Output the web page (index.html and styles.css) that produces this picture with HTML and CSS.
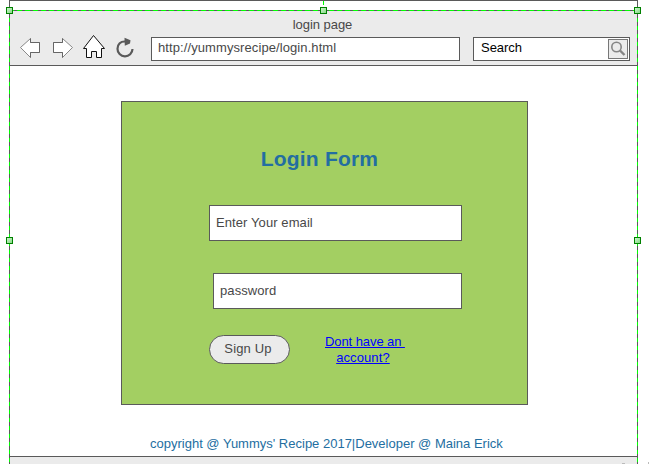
FILE: index.html
```html
<!DOCTYPE html>
<html lang="en">
<head>
<meta charset="utf-8">
<title>login page</title>
<link rel="stylesheet" href="styles.css">
</head>
<body>
<div class="window">
  <div class="top-strip"></div>
  <header class="toolbar">
    <div class="title"><span>login page</span></div>
    <div class="controls">
      <svg class="nav-icons" width="130" height="30" viewBox="10 34 130 30">
        <g fill="#fff" stroke="#888" stroke-width="1">
          <path d="M20.500 47.500L30.500 38.500V42.500H39.500V52.500H30.500V57.500Z"/>
          <path d="M72.500 47.500L62.500 38.500V42.500H53.500V52.500H62.500V57.500Z"/>
        </g>
        <path d="M30.500 38.500V42.500H39.500V52.500H30.500V57.500M62.500 38.500V42.500H53.500V52.500H62.500V57.500" fill="none" stroke="#666"/>
        <path d="M83.500 48.500L93.500 35.500L104.500 48.500H101.500V57.500H96.500V51.500H91.500V57.500H86.500V48.500Z" fill="#fff" stroke="#111"/>
        <path d="M126 41.600C120.500 40.800 117.500 44.500 117.500 48.700A7.500 7.500 0 0 0 132.500 49" fill="none" stroke="#5a5a5a" stroke-width="2.200"/>
        <path d="M124.500 37.800L130.500 40.200L130 43.500L124.800 45.800Z" fill="#5a5a5a"/>
      </svg>
      <div class="url">http://yummysrecipe/login.html</div>
      <div class="search">
        <span>Search</span>
        <svg class="magnifier" width="20" height="20" viewBox="0 0 20 20">
          <rect x=".5" y=".5" width="19" height="19" fill="#ebebeb" stroke="#777"/>
          <circle cx="8.500" cy="8" r="4.700" fill="none" stroke="#858585" stroke-width="1.600"/>
          <path d="M12 11.500L16.500 16" stroke="#858585" stroke-width="2.400"/>
        </svg>
      </div>
    </div>
  </header>
  <main class="page">
    <form class="login">
      <h1><span>Login Form</span></h1>
      <div class="field email">Enter Your email</div>
      <div class="field password">password</div>
      <div class="actions">
        <button type="button">Sign Up</button>
        <a href="#">Dont have an <br><span class="second-line">account?</span></a>
      </div>
    </form>
    <p class="copyright"><span>copyright @ Yummys' Recipe 2017|Developer @ Maina Erick</span></p>
  </main>
  <footer class="status"></footer>
  <svg class="selection" width="652" height="464" viewBox="0 0 652 464">
    <defs>
      <linearGradient id="handle" x1="0" y1="0" x2="1" y2="1">
        <stop offset="0" stop-color="#d3f5d3"/><stop offset="1" stop-color="#80d880"/>
      </linearGradient>
    </defs>
    <g fill="none" stroke="#5a5a5a">
      <path d="M9.500 0V464M637.500 0V464M9 10.500H638"/>
      <path d="M9.500 10V464M637.500 10V464" stroke="#0f0" stroke-dasharray="4 4"/>
      <path d="M9 10.500H638" stroke="#0f0" stroke-dasharray="5 3"/>
      <path d="M323.500 1V5" stroke="#0f0"/>
    </g>
    <g fill="url(#handle)" stroke="#008000">
      <rect x="6.500" y="7.500" width="6" height="6"/>
      <rect x="320.500" y="7.500" width="6" height="6"/>
      <rect x="634.500" y="7.500" width="6" height="6"/>
      <rect x="6.500" y="237.500" width="6" height="6"/>
      <rect x="634.500" y="237.500" width="6" height="6"/>
    </g>
    <path d="M622 463.500H625M648.500 462V464" stroke="#bbb"/>
  </svg>
</div>
</body>
</html>
```
FILE: styles.css
```css
* { box-sizing: border-box; }
body {
  margin: 0;
  background: #fff;
  color: #484848;
  font: 13px/16px "Liberation Sans", Arial, sans-serif;
  letter-spacing: .09px;
  overflow: hidden;
}
.window {
  position: relative;
  display: flex;
  flex-direction: column;
  height: 464px;
  padding: 0 14px 0 9px;
}
.top-strip { height: 10px; border-top: 1px solid #5a5a5a; }
.toolbar {
  height: 56px;
  background: #ebebeb;
  border-bottom: 1px solid #5a5a5a;
}
.title {
  height: 24px;
  padding-top: 7px;
  padding-right: 2px;
  text-align: center;
  letter-spacing: -.05px;
}
.controls { display: flex; padding-left: 1px; }
.nav-icons { flex: none; margin-right: 11px; }
.url, .search {
  height: 24px;
  margin-top: 3px;
  border: 1px solid #5a5a5a;
  background: #fff;
}
.url { width: 309px; padding: 2px 6px; }
.search {
  display: flex;
  justify-content: space-between;
  width: 157px;
  margin-left: 13px;
  padding: 1px 1px 0 7px;
  color: #000;
  letter-spacing: -.04px;
}
.search span { padding-top: 1px; }
.page { height: 390px; padding: 35px 0 0 112px; }
.login {
  width: 407px;
  height: 304px;
  padding: 45px 65px 0 87px;
  border: 1px solid #5a5a5a;
  background: #a3cf62;
}
h1 {
  height: 58px;
  margin: 0 -65px 0 -87px;
  padding-right: 10px;
  color: #236ea1;
  font-size: 21px;
  line-height: 24px;
  letter-spacing: .2px;
  text-align: center;
}
.field {
  height: 36px;
  padding: 9px 6px;
  border: 1px solid #5a5a5a;
  background: #fff;
}
.password { margin: 32px 0 26px 4px; }
.actions { display: flex; }
button {
  width: 81px;
  height: 29px;
  padding: 0 3px 2px 0;
  border: 1px solid #5a5a5a;
  border-radius: 15px;
  background: #ebebeb;
  color: #484848;
  font: inherit;
  letter-spacing: .15px;
}
a {
  margin: -1px 0 0 35px;
  color: #00f;
  letter-spacing: -.08px;
  text-align: center;
  white-space: pre;
}
.second-line { margin-right: 4px; letter-spacing: .1px; }
.copyright {
  margin: 31px 0 0 29px;
  color: #236ea1;
  letter-spacing: 0;
  white-space: nowrap;
}
.status { height: 8px; background: #ebebeb; border-top: 1px solid #5a5a5a; }
.selection { position: absolute; top: 0; left: 0; pointer-events: none; }
```
